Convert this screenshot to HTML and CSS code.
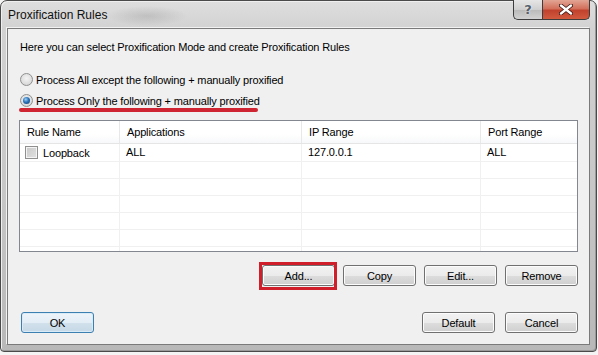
FILE: index.html
```html
<!DOCTYPE html>
<html lang="en">
<head>
  <meta charset="UTF-8">
  <title>Proxification Rules</title>
  <link rel="stylesheet" href="styles.css">
</head>
<body>

  <div class="window">
    <div class="titlebar">
      <span class="title">Proxification Rules</span>
      <div class="caption-buttons">
        <span class="cap-btn help">?</span>
        <span class="cap-btn close">
          <svg width="14" height="11" viewBox="0 0 14 11">
            <path d="M2 1.5 L12 9.5 M12 1.5 L2 9.5" stroke="#3a1410" stroke-width="4" stroke-linecap="round"/>
            <path d="M2 1.5 L12 9.5 M12 1.5 L2 9.5" stroke="#fff" stroke-width="2.4" stroke-linecap="round"/>
          </svg>
        </span>
      </div>
    </div>

    <div class="client">
      <p class="intro">Here you can select Proxification Mode and create Proxification Rules</p>

      <div class="radio"><span class="radio-box"></span>Process All except the following + manually proxified</div>
      <div class="radio"><span class="radio-box checked"></span>Process Only the following + manually proxified</div>
      <div class="mark-line"></div>

      <div class="list">
        <div class="list-head">
          <div class="cell">Rule Name</div>
          <div class="cell">Applications</div>
          <div class="cell">IP Range</div>
          <div class="cell">Port Range</div>
        </div>
        <div class="list-row first">
          <div class="cell name"><span class="check"></span>Loopback</div>
          <div class="cell">ALL</div>
          <div class="cell">127.0.0.1</div>
          <div class="cell">ALL</div>
        </div>
        <div class="list-row"><div class="cell"></div><div class="cell"></div><div class="cell"></div><div class="cell"></div></div>
        <div class="list-row"><div class="cell"></div><div class="cell"></div><div class="cell"></div><div class="cell"></div></div>
        <div class="list-row"><div class="cell"></div><div class="cell"></div><div class="cell"></div><div class="cell"></div></div>
        <div class="list-row"><div class="cell"></div><div class="cell"></div><div class="cell"></div><div class="cell"></div></div>
        <div class="list-row"><div class="cell"></div><div class="cell"></div><div class="cell"></div><div class="cell"></div></div>
        <div class="list-row"><div class="cell"></div><div class="cell"></div><div class="cell"></div><div class="cell"></div></div>
      </div>

      <div class="actions">
        <button class="btn marked">Add...</button>
        <button class="btn">Copy</button>
        <button class="btn">Edit...</button>
        <button class="btn">Remove</button>
      </div>

      <div class="footer">
        <button class="btn default">OK</button>
        <div class="footer-right">
          <button class="btn">Default</button>
          <button class="btn">Cancel</button>
        </div>
      </div>
    </div>
  </div>

</body>
</html>
```

FILE: styles.css
```css
* {
  margin: 0;
  padding: 0;
  box-sizing: border-box;
}
body {
  font-family: 'Liberation Sans', Arial, sans-serif;
  font-size: 11px;
  letter-spacing: -0.15px;
  color: #000;
  background: #f4f4f4;
}
.window {
  width: 597px;
  height: 352px;
  border: 1px solid #4a4a4a;
  border-radius: 7px 7px 4px 4px;
  padding: 0 6px 6px 6px;
  background: linear-gradient(180deg, #dedede 0, #d2d2d2 28px, #c6c6c6 200px, #b8b8b8 100%);
  box-shadow: inset 1px 1px 0 #efefef, inset -1px -1px 0 #9a9a9a;
  display: flex;
  flex-direction: column;
}
.titlebar {
  height: 27px;
  display: flex;
  justify-content: space-between;
  align-items: flex-start;
  background: radial-gradient(ellipse 40px 10px at 140px 15px, rgba(120, 120, 120, 0.25), transparent);
}
.title {
  font-size: 12px;
  letter-spacing: 0;
  padding-left: 1px;
  line-height: 28px;
  color: #111;
}
.caption-buttons {
  display: flex;
  margin-top: -1px;
}
.cap-btn {
  height: 20px;
  display: flex;
  align-items: center;
  justify-content: center;
  border: 1px solid #3d3d3d;
  border-top: none;
}
.help {
  width: 29px;
  border-right: none;
  border-radius: 0 0 0 5px;
  background: linear-gradient(180deg, #e6e6e6 0, #cfcfcf 50%, #b9b9b9 51%, #d2d2d2 100%);
  font-family: 'DejaVu Sans', sans-serif;
  font-weight: bold;
  font-size: 13px;
  color: #56606c;
  text-shadow: 0 0 2px #fff;
}
.close {
  width: 48px;
  border-radius: 0 0 5px 0;
  background: linear-gradient(180deg, #e3a594 0, #d2705c 45%, #c1422e 55%, #d25a3e 100%);
}
.client {
  flex: 1;
  border: 1px solid #7a7a7a;
  background: #f0f0f0;
  padding: 11px 11px 0 11px;
  box-shadow: -1px -1px 0 #f2f2f2;
}
.intro {
  margin-left: 1px;
  line-height: 14px;
  margin-bottom: 15px;
}
.radio {
  height: 21px;
  display: flex;
  align-items: center;
  margin-left: 1px;
}
.radio-box {
  width: 13px;
  height: 13px;
  border-radius: 50%;
  border: 1px solid #8e8f8f;
  background: radial-gradient(circle at 50% 40%, #f4f4f4 0, #dedede 60%, #cbcbcb 100%);
  margin-right: 3px;
  display: flex;
  align-items: center;
  justify-content: center;
}
.radio-box.checked::after {
  content: "";
  width: 7px;
  height: 7px;
  border-radius: 50%;
  background: radial-gradient(circle at 40% 35%, #9fd0f4 0, #2a74bb 45%, #0c3a6a 100%);
}
.mark-line {
  height: 4px;
  width: 239px;
  margin-top: -3px;
  border-radius: 2px;
  background: #cf2431;
}
.list {
  margin-top: 8px;
  height: 132px;
  border: 1px solid #828790;
  background: #fff;
  overflow: hidden;
}
.list-head, .list-row {
  display: grid;
  grid-template-columns: 100px 182px 179px 1fr;
}
.list-head {
  height: 23px;
  border-bottom: 1px solid #e5e5e5;
  background: linear-gradient(180deg, #fff 0, #fff 60%, #f7f8fa 100%);
}
.list-head .cell {
  padding-left: 7px;
  line-height: 22px;
  border-right: 1px solid #e8e8e8;
}
.list-head .cell:last-child {
  border-right: none;
}
.list-row {
  height: 17px;
  border-bottom: 1px solid #f0f0f0;
}
.list-row.first {
  height: 18px;
}
.list-row .cell {
  padding-left: 6px;
  line-height: 16px;
  border-right: 1px solid #f0f0f0;
}
.list-row .cell:last-child {
  border-right: none;
}
.list-row .cell.name {
  padding-left: 5px;
  display: flex;
  align-items: center;
}
.check {
  width: 13px;
  height: 13px;
  border: 1px solid #8f8f8f;
  background: linear-gradient(135deg, #c8c8c8 0, #e2e2e2 100%);
  box-shadow: inset 0 0 0 1px #f4f4f4;
  margin-right: 5px;
}
.actions {
  display: flex;
  justify-content: flex-end;
  gap: 8px;
  margin-top: 13px;
}
.btn {
  width: 73px;
  height: 21px;
  font-family: 'Liberation Sans', Arial, sans-serif;
  font-size: 11px;
  letter-spacing: -0.15px;
  color: #000;
  border: 1px solid #707070;
  border-radius: 3px;
  background: linear-gradient(180deg, #f2f2f2 0, #ebebeb 50%, #dddddd 51%, #cfcfcf 100%);
  box-shadow: inset 0 0 0 1px #fcfcfc;
}
.btn.marked {
  position: relative;
}
.btn.marked::after {
  content: "";
  position: absolute;
  left: -4px;
  top: -4px;
  right: -3px;
  bottom: -5px;
  border: 3px solid #d01f2b;
}
.btn.default {
  margin-left: 2px;
  border-color: #3c7fb1;
  background: linear-gradient(180deg, #eef5fa 0, #e3edf5 50%, #d2e1ec 51%, #c6d8e6 100%);
  box-shadow: inset 0 0 0 1px #d8ebf6;
}
.footer {
  display: flex;
  justify-content: space-between;
  margin-top: 26px;
}
.footer-right {
  display: flex;
  gap: 10px;
}
```
